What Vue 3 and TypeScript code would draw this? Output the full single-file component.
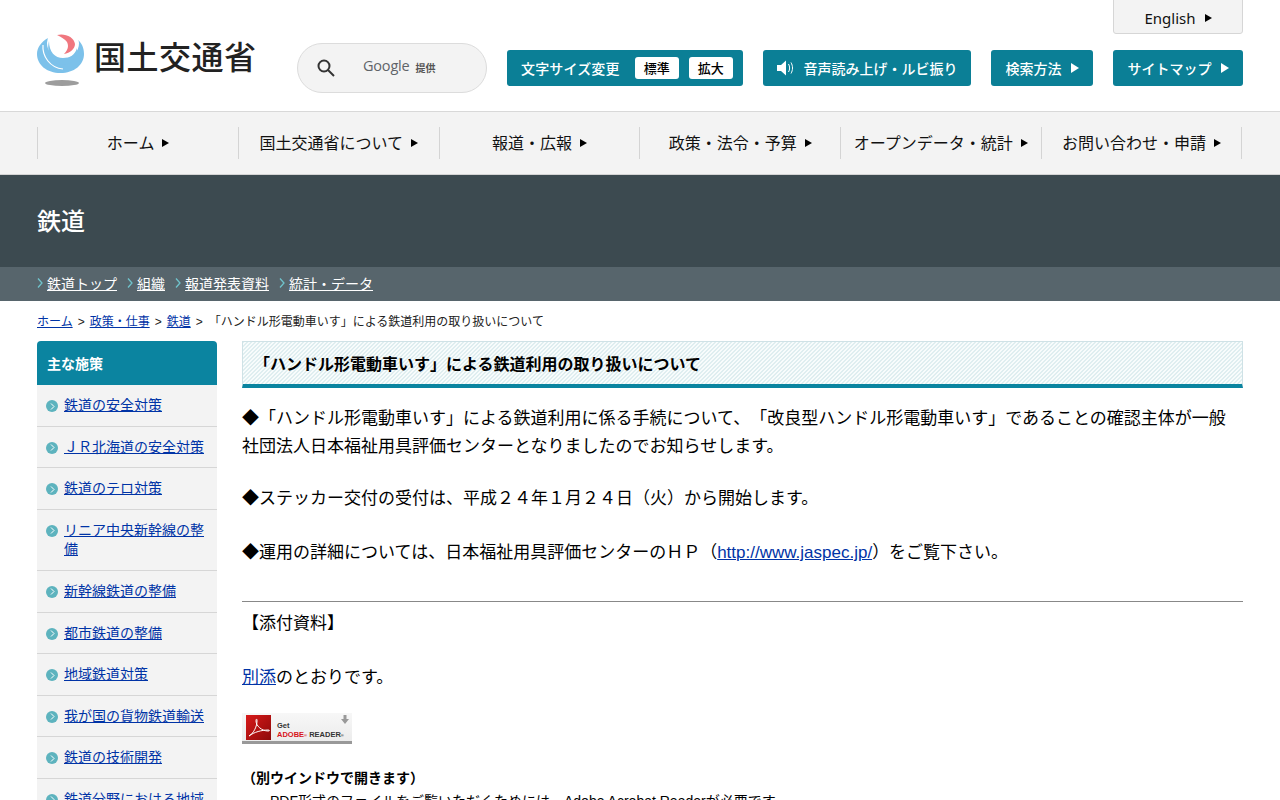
<script setup lang="ts">
const tools = ['音声読み上げ・ルビ振り']
const nav: string[] = ['ホーム', '国土交通省について', '報道・広報', '政策・法令・予算', 'オープンデータ・統計', 'お問い合わせ・申請']
const sub: string[] = ['鉄道トップ', '組織', '報道発表資料', '統計・データ']
const side: string[] = ['鉄道の安全対策', '\uFF2A\uFF32北海道の安全対策', '鉄道のテロ対策', 'リニア中央新幹線の整備', '新幹線鉄道の整備', '都市鉄道の整備', '地域鉄道対策', '我が国の貨物鉄道輸送', '鉄道の技術開発', '鉄道分野における地域']
</script>

<template>
  <div class="page">
    <header class="head">
      <a class="eng">English<i class="tri dark"></i></a>
      <div class="logo">
        <svg width="48" height="53" viewBox="0 0 48 53">
          <path d="M11 4C4 8 0 14 0 20C0 31 10 39 23.500 39C37 39 47 31 47 20C47 14 45 9 40 5L26 14Z" fill="#7cc1ea"/>
          <circle cx="26" cy="9" r="16" fill="#fff"/>
          <path d="M12 7C12 18 18 24 26 24C33 24 38 21 40 14C41 24 34 31 25 31C15 31 9 19 12 7Z" fill="#7cc1ea"/>
          <path d="M6 11C5 22 13 34 26 35" fill="none" stroke="#fff" stroke-width="1.200"/>
          <path d="M20 1C28-1 37 3 38 10C38 15 33 19 27 20C31 16 32 12 30 8C28 5 24 3 20 1Z" fill="#f0777f"/>
          <ellipse cx="25" cy="49" rx="17" ry="3" fill="#9d9d9d"/>
        </svg>
        <span class="logo-text">国土交通省</span>
      </div>
      <div class="search">
        <svg width="20" height="20" viewBox="0 0 20 20" fill="none" stroke="#333" stroke-width="2"><circle cx="8" cy="8" r="5.500"/><path d="M12 12l6 6"/></svg>
        <span class="google">Google</span><span class="prov">提供</span>
      </div>
      <div class="btn size">
        <span class="size-l">文字サイズ変更</span><b class="chip first">標準</b><b class="chip">拡大</b>
      </div>
      <div v-for="t in tools" :key="t" class="btn voice">
        <svg width="18" height="16" viewBox="0 0 18 16"><path d="M0 5h4l5-4.500v15L4 11H0z" fill="#fff"/><path d="M11.500 4c1.500 2.500 1.500 5.500 0 8M14 2.500c2 3.500 2 7.500 0 11" fill="none" stroke="#fff"/></svg>
        <span>{{ t }}</span>
      </div>
      <div class="btn how">検索方法<i class="tri wide"></i></div>
      <div class="btn map">サイトマップ<i class="tri wide"></i></div>
    </header>

    <nav class="gnav">
      <a v-for="n in nav" :key="n" class="gitem"><span>{{ n }}</span><i class="tri small dark"></i></a>
    </nav>

    <div class="band"><h1>鉄道</h1></div>
    <div class="subnav">
      <a v-for="s in sub" :key="s" class="subitem"><svg width="6" height="10" viewBox="0 0 6 10" fill="none" stroke="#6fc3cc" stroke-width="1.300"><path d="M1 .5L5 5 1 9.500"/></svg><u>{{ s }}</u></a>
    </div>

    <div class="crumb"><a>ホーム</a><span class="sep">&gt;</span><a>政策・仕事</a><span class="sep">&gt;</span><a>鉄道</a><span class="sep">&gt;</span>「ハンドル形電動車いす」による鉄道利用の取り扱いについて</div>

    <div class="cols">
      <aside class="side">
        <div class="side-head">主な施策</div>
        <ul>
          <li v-for="s in side" :key="s">
            <span class="dot"><svg width="5" height="7" viewBox="0 0 5 7" fill="none" stroke="#fff"><path d="M1 .5l3 3-3 3"/></svg></span>
            <a>{{ s }}</a>
          </li>
        </ul>
      </aside>
      <main class="main">
        <h2>「ハンドル形電動車いす」による鉄道利用の取り扱いについて</h2>
        <p class="p1">◆「ハンドル形電動車いす」による鉄道利用に係る手続について、「改良型ハンドル形電動車いす」であることの確認主体が一般社団法人日本福祉用具評価センターとなりましたのでお知らせします。</p>
        <p class="p2">◆ステッカー交付の受付は、平成２４年１月２４日（火）から開始します。</p>
        <p class="p3">◆運用の詳細については、日本福祉用具評価センターのＨＰ（<a>http://www.jaspec.jp/</a>）をご覧下さい。</p>
        <hr />
        <p class="p4">【添付資料】</p>
        <p class="p5"><a>別添</a>のとおりです。</p>
        <div class="adobe">
          <svg class="pdf" width="25" height="25" viewBox="0 0 25 25"><defs><linearGradient id="rg" x1="0" y1="0" x2="1" y2="1"><stop offset="0" stop-color="#d81a1a"/><stop offset="1" stop-color="#8d0a0a"/></linearGradient></defs><rect width="25" height="25" fill="url(#rg)"/><path d="M3 21c5-3 8-10 8-15 0-3-1-2-1 0 0 5 6 10 12 10 2 0 2-1 0-1-6 0-14 2-19 6z" fill="none" stroke="#fff"/></svg>
          <div class="adobe-t"><span>Get</span><span><em>ADOBE<small>®</small></em> READER<small>®</small></span></div>
          <svg class="arrow" width="8" height="9" viewBox="0 0 8 9"><path d="M2.500 0h3v4H8L4 9 0 4h2.500z" fill="#999"/></svg>
        </div>
        <p class="note">（別ウインドウで開きます）</p>
        <p class="note2">PDF形式のファイルをご覧いただくためには、Adobe Acrobat Readerが必要です。</p>
      </main>
    </div>
  </div>
</template>

<style>
html, body { margin: 0; height: 800px; overflow: hidden; background: #fff; }
</style>

<style scoped>
.page { width: 1280px; height: 800px; overflow: hidden; font-family: "Liberation Sans", "Noto Sans CJK JP", sans-serif; color: #000; text-spacing-trim: space-all; }
a { color: #0033a6; text-decoration: underline; }
.head { display: flex; align-items: flex-start; padding: 0 37px; box-sizing: border-box; width: 1280px; position: relative; border-bottom: 1px solid #d8d8d8; height: 112px; font-family: "Noto Sans CJK JP", sans-serif; }
.eng { position: absolute; top: -1px; left: 1113px; width: 130px; height: 35px; box-sizing: border-box; background: #f3f3f3; border: 1px solid #d6d6d6; border-radius: 0 0 3px 3px; display: flex; align-items: center; justify-content: center; padding-top: 2px; font: 15px "Noto Sans", "Noto Sans CJK JP", sans-serif; color: #111; text-decoration: none; }
.tri { display: inline-block; width: 0; height: 0; border-left: 7px solid #fff; border-top: 4.500px solid transparent; border-bottom: 4.500px solid transparent; margin-left: 9px; }
.tri.wide { border-left-width: 8px; border-top-width: 5px; border-bottom-width: 5px; }
.tri.dark { border-left-color: #000; }
.tri.small { border-left-width: 7px; border-top-width: 4px; border-bottom-width: 4px; margin-left: 8px; }
.logo { width: 260px; height: 53px; margin-top: 34px; display: flex; align-items: flex-start; flex: none; }
.logo svg { flex: none; }
.logo-text { font: 500 32px/1 "Noto Sans CJK JP", sans-serif; color: #222; margin: 5px 0 0 9px; letter-spacing: .5px; white-space: nowrap; }
.search { flex: none; width: 190px; height: 50px; box-sizing: border-box; margin-top: 43px; background: #f3f3f3; border: 1px solid #dcdcdc; border-radius: 25px; display: flex; align-items: center; padding-left: 18px; }
.google { font: 14.500px "Open Sans", sans-serif; color: #5f6368; margin-left: 27px; margin-top: -5px; letter-spacing: -.2px; }
.prov { font-size: 10px; color: #555; margin-left: 6px; font-weight: 700; margin-top: -1px; }
.btn { flex: none; height: 36px; margin-top: 50px; background: #0b7f96; color: #fff; border-radius: 3px; display: flex; align-items: center; justify-content: center; font-size: 14px; font-weight: 500; white-space: nowrap; box-sizing: border-box; padding-bottom: 1px; }
.size { width: 236px; margin-left: 20px; justify-content: flex-start; padding-left: 14px; }
.size-l { letter-spacing: .15px; }
.chip { background: #fff; color: #000; font-size: 13px; font-weight: 500; width: 44px; height: 22px; line-height: 22px; text-align: center; border-radius: 3px; margin-left: 10px; }
.chip.first { margin-left: 15px; }
.voice { width: 208px; margin-left: 20px; }
.voice span { margin-left: 9px; }
.how { width: 102px; margin-left: 20px; }
.map { width: 130px; margin-left: 20px; }
.gnav { height: 63px; box-sizing: border-box; background: #f3f3f3; border-bottom: 1px solid #d4d4d4; padding: 15px 37.700px 0 37.300px; display: flex; width: 1280px; font-family: "Noto Sans CJK JP", sans-serif; }
.gitem { flex: 1 1 0; height: 32px; border-left: 1px solid #d4d4d4; display: flex; align-items: center; justify-content: center; color: #111; font-size: 16px; text-decoration: none; white-space: nowrap; }
.gitem span { margin-top: -2px; }
.gitem:last-child { border-right: 1px solid #d4d4d4; }
.band { height: 92px; background: #3c4a50; display: flex; align-items: center; padding: 0 0 4px 37px; box-sizing: border-box; }
.band h1 { margin: 0; color: #fff; font: 500 24px "Noto Sans CJK JP", sans-serif; }
.subnav { height: 34px; background: #57656c; display: flex; align-items: center; padding: 0 0 2px 37px; box-sizing: border-box; font: 14px "Noto Sans CJK JP", sans-serif; }
.subitem { display: flex; align-items: center; color: #fff; margin-right: 10px; text-decoration: none; }
.subitem svg { margin-right: 4px; }
.subitem u { text-underline-offset: 1px; }
.crumb { margin: 13px 37px 0; height: 27px; font-size: 12px; line-height: 16px; color: #222; }
.sep { margin: 0 5px; }
.sep:nth-of-type(3) { margin-right: 6px; }
.cols { display: flex; gap: 25px; padding: 0 37px; }
.side { width: 180px; flex: none; font-family: "Noto Sans CJK JP", sans-serif; }
.side-head { height: 44px; background: #0b84a0; color: #fff; font-weight: 700; font-size: 14px; line-height: 45px; padding-left: 10px; border-radius: 4px 4px 0 0; }
ul { list-style: none; margin: 0; padding: 0; }
li { background: #f3f3f3; border-bottom: 1px solid #d6d6d6; padding: 10px 10px 11px 27px; position: relative; font-size: 14px; line-height: 19.600px; }
.dot { position: absolute; left: 9px; top: 15px; width: 12px; height: 12px; background: #5db3be; border-radius: 50%; display: flex; align-items: center; justify-content: center; }
.main { width: 1001px; flex: none; }
h2 { margin: 0; height: 47px; box-sizing: border-box; border: 1px solid #cfe2e6; border-bottom: 4px solid #0b84a0; background: repeating-linear-gradient(135deg, #dfeef0 0 1.414px, #f8fcfc 1.414px 2.828px); padding-left: 11px; font-size: 16px; line-height: 45px; font-weight: 700; white-space: nowrap; }
p { margin: 0; font-size: 17px; line-height: 28px; }
.p1 { margin-top: 17px; padding-right: 14px; }
.p2 { margin-top: 24px; }
.p3 { margin-top: 26px; }
hr { margin: 34px 0 0; height: 1px; border: 0; background: #888; }
.p4 { margin-top: 8px; }
.p5 { margin-top: 26px; }
.adobe { margin-top: 21px; width: 110px; height: 31px; box-sizing: border-box; background: linear-gradient(#f7f7f7, #ececec); border-bottom: 3px solid #999; position: relative; display: flex; align-items: flex-start; padding: 2px 0 0 4px; }
.pdf { flex: none; }
.adobe-t { display: flex; flex-direction: column; font: 700 7.500px/9px "Liberation Sans", sans-serif; color: #333; margin: 6px 0 0 6px; white-space: nowrap; }
.adobe-t em { font-style: normal; color: #d8141b; }
.adobe-t small { font-size: 4px; }
.arrow { position: absolute; top: 2px; right: 3px; }
.note { margin-top: 20px; font-size: 14px; font-weight: 700; line-height: 28px; }
.note2 { font-size: 14px; line-height: 18px; padding-left: 28px; margin-top: 0; white-space: nowrap; }
</style>
